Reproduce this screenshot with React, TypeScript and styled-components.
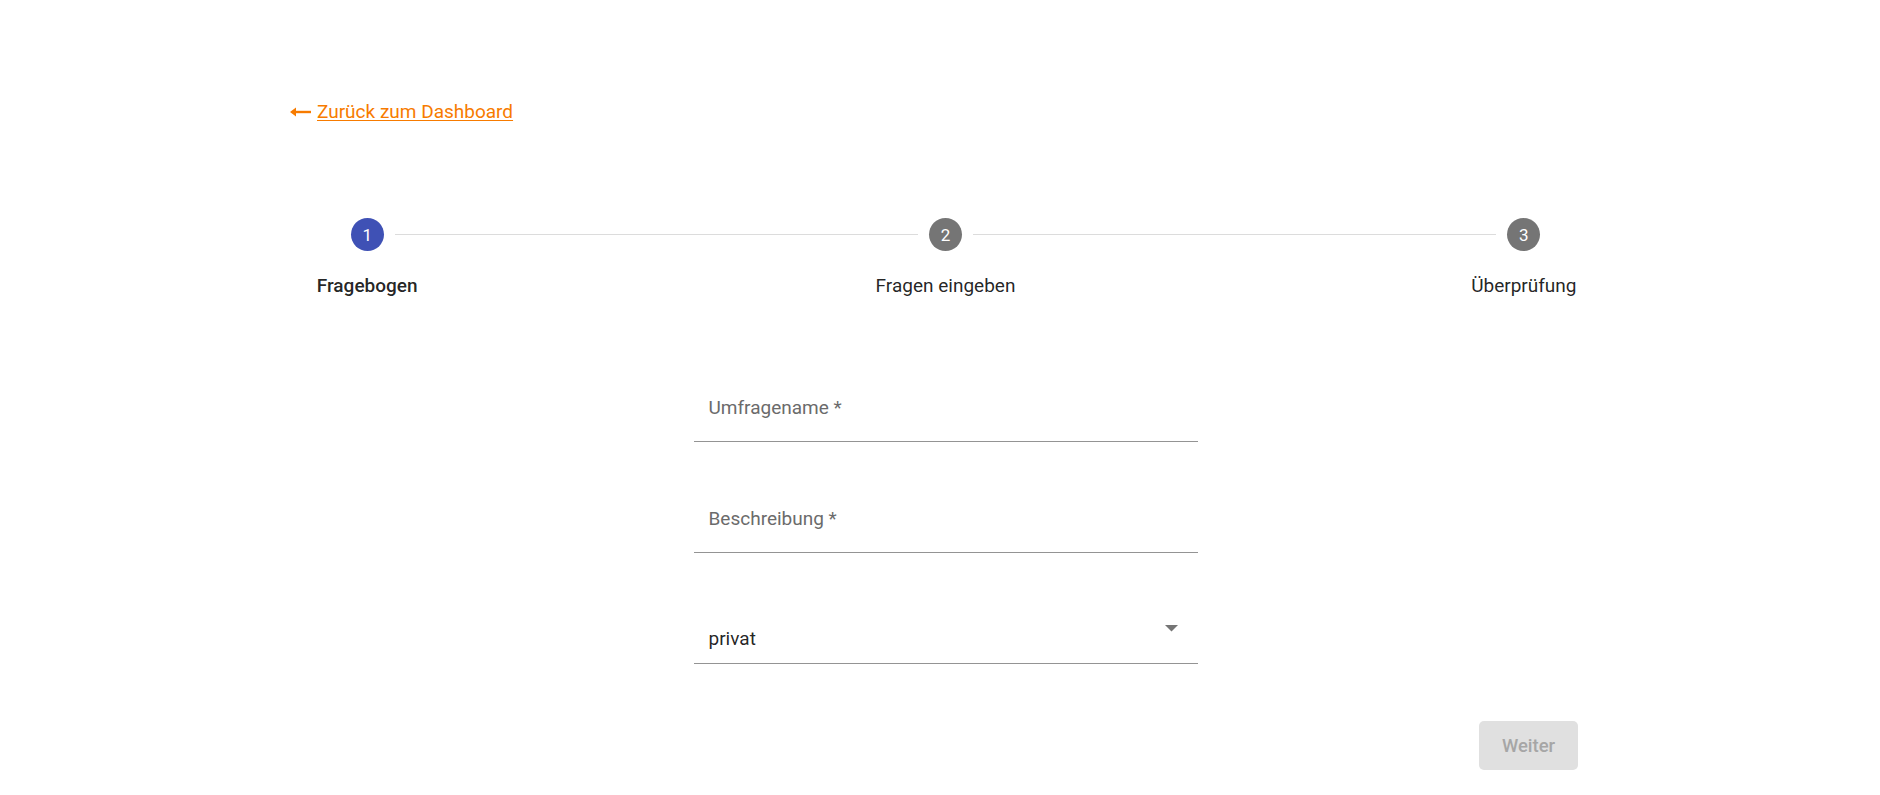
import React from "react";
import styled, { createGlobalStyle } from "styled-components";

const steps = ["Fragebogen", "Fragen eingeben", "Überprüfung"];

export default function App() {
    const active = 0;
    return (
        <>
            <GlobalStyle />
            <Page>
                <BackRow>
                    <BackLink href="#">
                        <svg width="21" height="10" viewBox="0 0 21 10">
                            <path d="M2 5h19" stroke="currentColor" strokeWidth="2.4" />
                            <path d="M0 5l6-4.5v9z" fill="currentColor" />
                        </svg>
                        <span>Zurück zum Dashboard</span>
                    </BackLink>
                </BackRow>
                <Main>
                    <Stepper>
                        {steps.map((label, i) => (
                            <Step key={label}>
                                <IconRow>
                                    <HalfLine $side="left" $hidden={i === 0} />
                                    <StepCircle $active={i === active}>{i + 1}</StepCircle>
                                    <HalfLine $side="right" $hidden={i === steps.length - 1} />
                                </IconRow>
                                <StepLabel $active={i === active}>{label}</StepLabel>
                            </Step>
                        ))}
                    </Stepper>
                    <Form>
                        <TextInput placeholder="Umfragename *" />
                        <TextInput placeholder="Beschreibung *" />
                        <Select>
                            <SelectValue>privat</SelectValue>
                            <svg width="13" height="7" viewBox="0 0 13 7" style={{ marginTop: 26, marginRight: 20 }}>
                                <path d="M0 0h13L6.5 6.5z" fill="#757575" />
                            </svg>
                        </Select>
                    </Form>
                    <Actions>
                        <NextButton disabled>Weiter</NextButton>
                    </Actions>
                </Main>
            </Page>
        </>
    );
}

const GlobalStyle = createGlobalStyle`
    body {
        margin: 0;
        background: #fff;
        font-family: Roboto, "Noto Sans", sans-serif;
    }
`;

const Page = styled.div`
    padding-top: 100px;
    min-height: 795px;
    box-sizing: border-box;
`;

const BackRow = styled.div`
    padding-left: 290px;
`;

const BackLink = styled.a`
    display: inline-flex;
    align-items: center;
    gap: 6px;
    color: #f77b00;
    font-size: 19px;
    line-height: 24px;
    text-decoration: none;

    span {
        text-decoration: underline;
        text-underline-offset: 2px;
    }
`;

const Main = styled.div`
    margin: 0 67px 0 78px;
`;

const Stepper = styled.div`
    display: flex;
    margin-top: 94px;
`;

const Step = styled.div`
    flex: 1;
    display: flex;
    flex-direction: column;
    align-items: center;
`;

const IconRow = styled.div`
    display: flex;
    align-items: center;
    width: 100%;
`;

const HalfLine = styled.div<{ $side: "left" | "right"; $hidden: boolean }>`
    flex: 1;
    height: 1px;
    background: #dcdcdc;
    visibility: ${(p) => (p.$hidden ? "hidden" : "visible")};
    margin-${(p) => (p.$side === "left" ? "right" : "left")}: 11px;
`;

const StepCircle = styled.div<{ $active: boolean }>`
    width: 33px;
    height: 33px;
    border-radius: 50%;
    background: ${(p) => (p.$active ? "#3f51b5" : "#757575")};
    color: #fff;
    font-size: 17px;
    display: flex;
    align-items: center;
    justify-content: center;
`;

const StepLabel = styled.div<{ $active: boolean }>`
    margin-top: 22px;
    font-size: 19px;
    line-height: 26px;
    color: rgba(0, 0, 0, 0.87);
    font-weight: ${(p) => (p.$active ? 500 : 400)};
`;

const Form = styled.div`
    width: 504px;
    margin: 78px auto 0;
    display: flex;
    flex-direction: column;
    gap: 46px;
`;

const TextInput = styled.input`
    box-sizing: border-box;
    height: 65px;
    padding: 0 15px 3px;
    border: none;
    border-bottom: 1px solid #949494;
    outline: none;
    font-family: inherit;
    font-size: 19px;
    color: rgba(0, 0, 0, 0.87);
    background: transparent;

    &::placeholder {
        color: #6b6b6b;
    }
`;

const Select = styled.div`
    box-sizing: border-box;
    height: 65px;
    display: flex;
    align-items: flex-start;
    padding-left: 15px;
    border-bottom: 1px solid #949494;
`;

const SelectValue = styled.div`
    flex: 1;
    margin-top: 28px;
    font-size: 19px;
    line-height: 24px;
    color: rgba(0, 0, 0, 0.87);
`;

const Actions = styled.div`
    display: flex;
    justify-content: flex-end;
    padding-right: 235px;
    margin-top: 57px;
`;

const NextButton = styled.button`
    width: 99px;
    height: 49px;
    border: none;
    border-radius: 5px;
    background: #e0e0e0;
    color: #a6a6a6;
    font-family: inherit;
    font-size: 18.5px;
    font-weight: 500;
`;
